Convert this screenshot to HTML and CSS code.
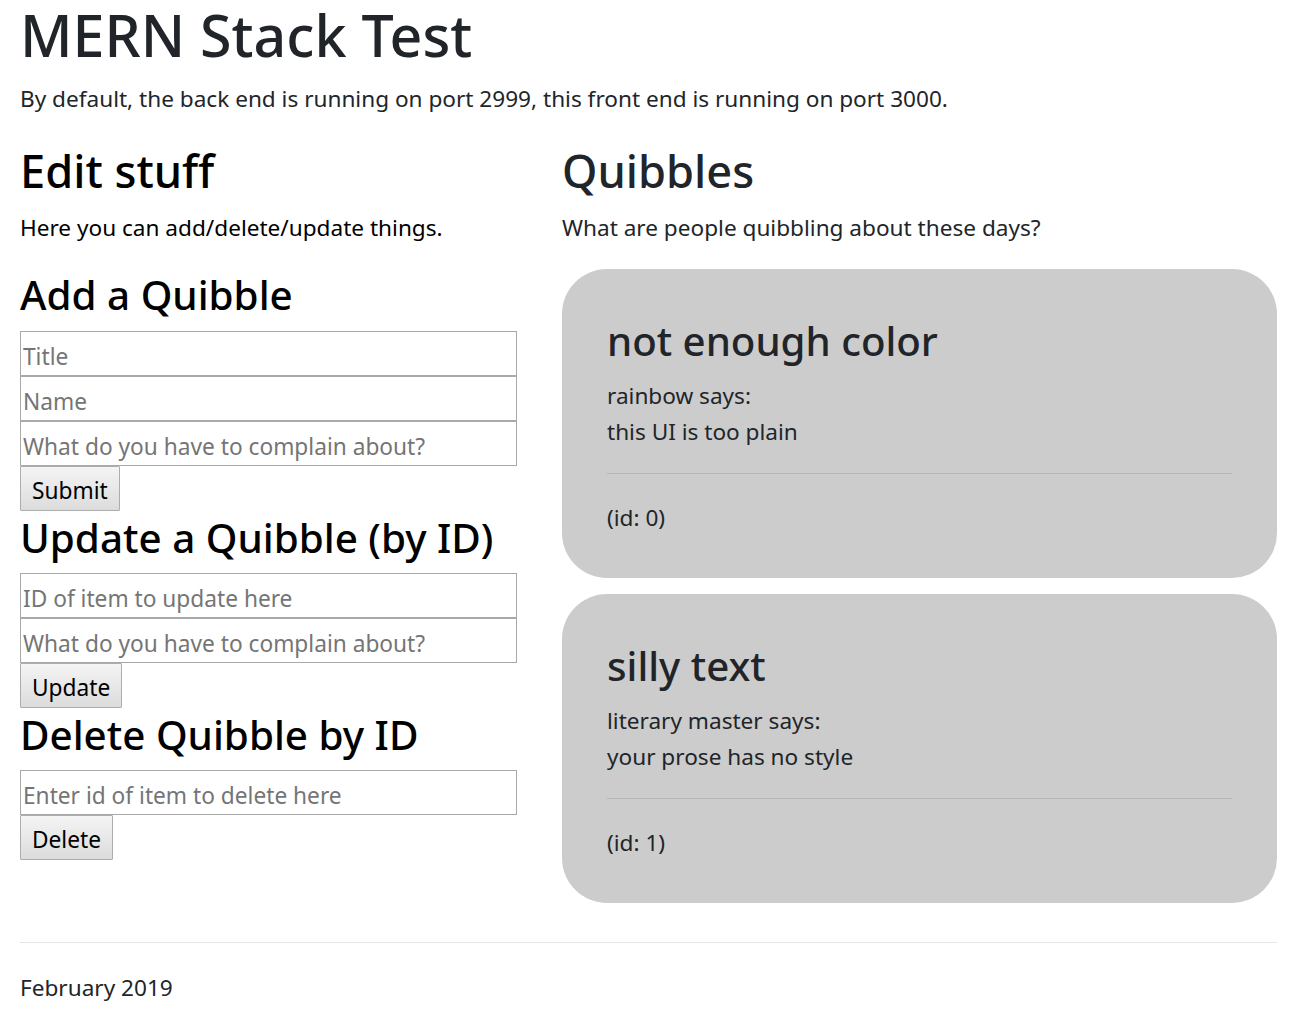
FILE: index.html
```html
<!DOCTYPE html>
<html lang="en">
<head>
<meta charset="utf-8">
<title>MERN Stack Test</title>
<link rel="stylesheet" href="styles.css">
</head>
<body>
<div class="page">
  <h1 class="title">MERN Stack Test</h1>
  <p class="intro">By default, the back end is running on port 2999, this front end is running on port 3000.</p>

  <div class="columns">
    <section class="edit">
      <h2 class="section-title">Edit stuff</h2>
      <p class="section-text">Here you can add/delete/update things.</p>

      <form class="qform qform-first">
        <h3 class="form-title">Add a Quibble</h3>
        <input class="field" type="text" placeholder="Title">
        <input class="field" type="text" placeholder="Name">
        <input class="field" type="text" placeholder="What do you have to complain about?">
        <button class="btn" type="button">Submit</button>
      </form>

      <form class="qform">
        <h3 class="form-title">Update a Quibble (by ID)</h3>
        <input class="field" type="text" placeholder="ID of item to update here">
        <input class="field" type="text" placeholder="What do you have to complain about?">
        <button class="btn" type="button">Update</button>
      </form>

      <form class="qform">
        <h3 class="form-title">Delete Quibble by ID</h3>
        <input class="field" type="text" placeholder="Enter id of item to delete here">
        <button class="btn" type="button">Delete</button>
      </form>
    </section>

    <section class="quibbles">
      <h2 class="section-title dark">Quibbles</h2>
      <p class="section-text dark">What are people quibbling about these days?</p>

      <div class="cards">
        <article class="card">
          <h3 class="card-title">not enough color</h3>
          <p class="card-line card-first">rainbow says:</p>
          <p class="card-line">this UI is too plain</p>
          <hr class="card-rule">
          <p class="card-line">(id: 0)</p>
        </article>
        <article class="card">
          <h3 class="card-title">silly text</h3>
          <p class="card-line card-first">literary master says:</p>
          <p class="card-line">your prose has no style</p>
          <hr class="card-rule">
          <p class="card-line">(id: 1)</p>
        </article>
      </div>
    </section>
  </div>

  <hr class="footer-rule">
  <p class="footer-text">February 2019</p>
</div>
</body>
</html>
```

FILE: styles.css
```css
html, body {
  margin: 0;
  padding: 0;
  background: #ffffff;
}

body {
  font-family: "Noto Sans", "Open Sans", "Liberation Sans", sans-serif;
  font-size: 22.6px;
  line-height: 36px;
  color: #212529;
}

.page {
  padding: 0 19px 0 20px;
}

.title {
  margin: 0 0 11px;
  font-size: 57.3px;
  line-height: 70px;
  font-weight: 500;
  color: #212529;
}

.intro {
  margin: 0 0 27px;
}

.columns {
  display: grid;
  grid-template-columns: 497px 1fr;
  column-gap: 45px;
  align-items: start;
}

.edit {
  color: #000;
}

.section-title {
  margin: 0 0 12px;
  font-size: 45.2px;
  line-height: 54px;
  font-weight: 500;
}

.section-text {
  margin: 0;
}

.dark {
  color: #212529;
}

.qform {
  display: flex;
  flex-direction: column;
  align-items: flex-start;
  margin: 0;
}

.form-title {
  margin: 2px 0 10px;
  font-size: 40.4px;
  line-height: 50px;
  font-weight: 500;
}

.qform-first .form-title {
  margin: 24px 0 11px;
}

.field {
  box-sizing: border-box;
  width: 497px;
  height: 45px;
  margin: 0;
  padding: 6px 2px 0;
  border: 1px solid #a9a9a9;
  border-radius: 0;
  font-family: inherit;
  font-size: 22.7px;
  color: #000;
  background: #fff;
  outline: none;
}

.field::placeholder {
  color: #757575;
}

.btn {
  box-sizing: border-box;
  height: 45px;
  margin: 0;
  padding: 4px 11px 0;
  border: 1px solid #adadad;
  border-radius: 1px;
  background: linear-gradient(#f4f4f4, #dcdcdc);
  font-family: inherit;
  font-size: 22.7px;
  color: #000;
}

.cards {
  display: flex;
  flex-direction: column;
  gap: 16px;
  margin-top: 23px;
}

.card {
  background: #cccccc;
  border-radius: 45px;
  padding: 47px 45px 42px;
}

.card-title {
  margin: 0;
  font-size: 40.2px;
  line-height: 50px;
  font-weight: 500;
  color: #212529;
}

.card-line {
  margin: 0;
}

.card-first {
  margin-top: 12px;
}

.card-rule {
  margin: 23px 0 26px;
  border: 0;
  border-top: 1px solid rgba(0, 0, 0, 0.1);
  height: 0;
}

.footer-rule {
  margin: 39px 0 27px;
  border: 0;
  border-top: 1px solid rgba(0, 0, 0, 0.1);
  height: 0;
}

.footer-text {
  margin: 0;
}
```
